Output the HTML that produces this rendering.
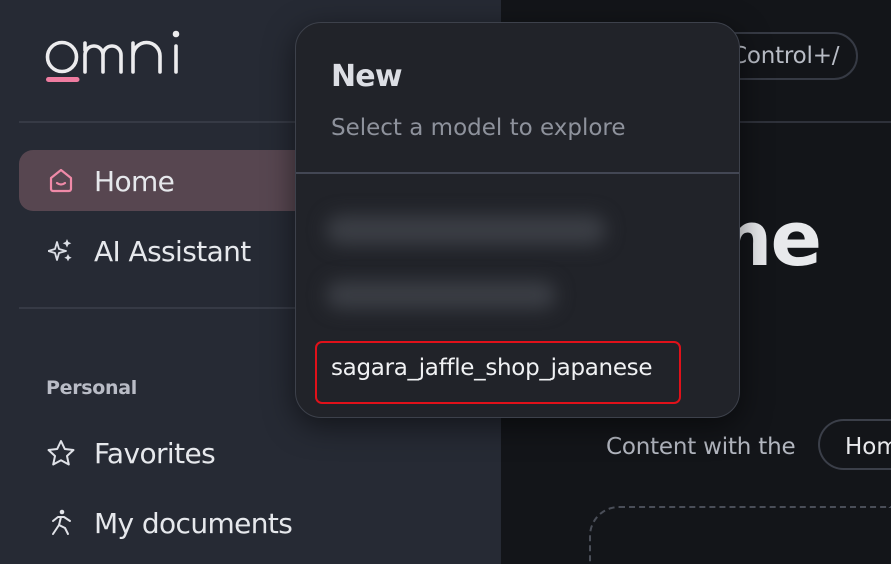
<!DOCTYPE html>
<html><head><meta charset="utf-8"><style>
*{margin:0;padding:0;box-sizing:border-box}
html,body{width:891px;height:564px;overflow:hidden}
body{background:#131519;font-family:"DejaVu Sans","Liberation Sans",sans-serif;position:relative}
.side{position:absolute;left:0;top:0;width:501px;height:564px;background:#262a34}
.abs{position:absolute;white-space:nowrap}
.hr{position:absolute;height:2px;background:#363a45}
.nav{font-size:28px;color:#e6e8ec;letter-spacing:-0.6px}
.pop{position:absolute;left:295px;top:22px;width:445px;height:396px;background:#212329;border:1px solid #3d414b;border-radius:26px;box-shadow:0 8px 30px rgba(0,0,0,.5);overflow:hidden}
.blur{position:absolute;background:#3b3e45;filter:blur(9px);border-radius:20px}
</style></head><body>
<div class="side">
  <svg class="abs" style="left:0;top:0" width="200" height="90" viewBox="0 0 200 90" fill="none" stroke="#ececee" stroke-width="3.6" stroke-linecap="round">
    <circle cx="62" cy="57" r="14.5"/>
    <path d="M85 72 V55 a9 9 0 0 1 18 0 V72 M103 55 a9 9 0 0 1 18 0 V72"/>
    <path d="M85 43 V50"/>
    <path d="M133 72 V43 M133 56 a13 13 0 0 1 27 0 V72"/>
    <path d="M176 46 V72"/>
    <circle cx="176" cy="34" r="1.5" fill="#ececee"/>
    <path d="M48.5 79.5 H77" stroke="#ee7ca0" stroke-width="5"/>
  </svg>
  <div class="hr" style="left:19px;top:121px;width:482px"></div>
  <div class="abs" style="left:19px;top:150px;width:482px;height:61px;border-radius:14px;background:#574650"></div>
  <svg class="abs" style="left:49px;top:168px" width="26" height="26" viewBox="0 0 26 26" fill="none" stroke="#f08aa8" stroke-width="2.2" stroke-linejoin="round" stroke-linecap="round"><path d="M2 10 L12 2 L22 10 V21 a2 2 0 0 1 -2 2 H4 a2 2 0 0 1 -2 -2 Z"/><path d="M8 15 q4 3 8 0"/></svg>
  <div class="abs nav" style="left:94px;top:165px">Home</div>
  <svg class="abs" style="left:48px;top:238px" width="26" height="26" viewBox="0 0 26 26" fill="#dcdfe6"><path d="M9 4 L11 11 L18 13 L11 15 L9 22 L7 15 L0 13 L7 11 Z" fill="none" stroke="#dcdfe6" stroke-width="1.8" stroke-linejoin="round"/><path d="M19 1 l1.3 3 3 1.3 -3 1.3 -1.3 3 -1.3 -3 -3 -1.3 3 -1.3z"/><path d="M20 16 l1.2 2.5 2.5 1.2 -2.5 1.2 -1.2 2.5 -1.2 -2.5 -2.5 -1.2 2.5 -1.2z"/></svg>
  <div class="abs nav" style="left:94px;top:235px">AI Assistant</div>
  <div class="hr" style="left:19px;top:307px;width:482px"></div>
  <div class="abs" style="left:46px;top:377px;font-size:19px;color:#b9bcc6;font-weight:bold;letter-spacing:-0.3px">Personal</div>
  <svg class="abs" style="left:46px;top:439px" width="30" height="28" viewBox="0 0 30 28" fill="none" stroke="#e0e2e8" stroke-width="2" stroke-linejoin="round"><path d="M15 2 L18.8 10 L27.5 11 L21 17 L22.8 25.5 L15 21.2 L7.2 25.5 L9 17 L2.5 11 L11.2 10 Z"/></svg>
  <div class="abs nav" style="left:94px;top:437px">Favorites</div>
  <svg class="abs" style="left:50px;top:508px" width="24" height="28" viewBox="0 0 24 28" fill="none" stroke="#e0e2e8" stroke-width="2" stroke-linecap="round" stroke-linejoin="round"><circle cx="12" cy="4" r="2.3" fill="#e0e2e8" stroke="none"/><path d="M3 13 L8 9 H14 L20 13"/><path d="M11 9 L9 17 L3 26"/><path d="M9 17 L15 20 L18 26"/></svg>
  <div class="abs nav" style="left:94px;top:507px">My documents</div>
</div>
<div class="hr" style="left:501px;top:121px;width:390px;background:#2e313a"></div>
<div class="abs" style="left:712px;top:32px;width:146px;height:48px;border:2px solid #363a44;border-radius:24px"></div>
<div class="abs" style="left:731px;top:43px;font-size:23px;color:#b9bdc6;letter-spacing:-0.2px">Control+/</div>
<div class="abs" style="right:71px;top:194px;font-size:76px;font-weight:bold;color:#e8e9ec;letter-spacing:-2px">Home</div>
<div class="abs" style="left:606px;top:434px;font-size:23px;color:#b3b7c0;letter-spacing:-0.2px">Content with the</div>
<div class="abs" style="left:818px;top:419px;width:73px;height:51px;border:2px solid #3b3f49;border-right:none;border-radius:26px 0 0 26px"></div>
<div class="abs" style="left:845px;top:434px;width:46px;overflow:hidden;font-size:23px;color:#e8e9ec">Home</div>
<div class="abs" style="left:589px;top:506px;width:302px;height:58px;border-top:2px dashed #4a4e58;border-left:2px dashed #4a4e58;border-top-left-radius:30px"></div>
<div class="pop">
  <div class="abs" style="left:35px;top:36px;font-size:30px;font-weight:bold;color:#dcdee4;letter-spacing:-0.8px">New</div>
  <div class="abs" style="left:35px;top:92px;font-size:23px;color:#8e929c;letter-spacing:0px">Select a model to explore</div>
  <div class="hr" style="left:0;top:149px;width:445px;height:2px;background:#434754"></div>
  <div class="blur" style="left:30px;top:192px;width:280px;height:30px"></div>
  <div class="blur" style="left:30px;top:258px;width:230px;height:28px"></div>
  <div class="abs" style="left:19px;top:318px;width:366px;height:63px;border:2px solid #e0111a;border-radius:7px"></div>
  <div class="abs" style="left:35px;top:332px;font-size:23px;color:#f0f1f3;letter-spacing:-0.3px">sagara_jaffle_shop_japanese</div>
</div>
</body></html>
